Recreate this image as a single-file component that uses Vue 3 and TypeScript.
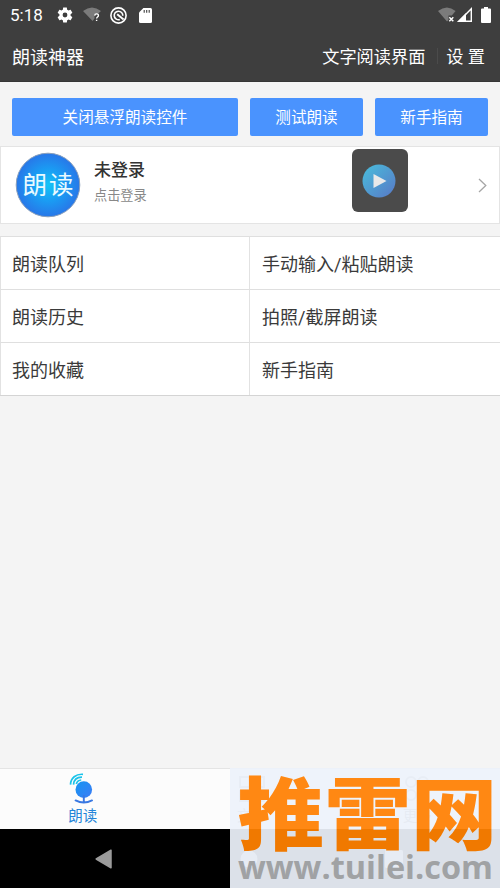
<script setup lang="ts">
interface Action {
  label: string
  wide?: boolean
}

const actions: Action[] = [
  { label: '关闭悬浮朗读控件', wide: true },
  { label: '测试朗读' },
  { label: '新手指南' },
]

const menu: string[] = [
  '朗读队列',
  '手动输入/粘贴朗读',
  '朗读历史',
  '拍照/截屏朗读',
  '我的收藏',
  '新手指南',
]
</script>

<template>
  <div class="screen">
    <header class="top">
      <div class="status">
        <span class="clock">5:18</span>
        <svg class="gear" width="18" height="18" viewBox="0 0 24 24">
          <path fill="#fff" d="M19.43 12.98c.04-.32.07-.64.07-.98s-.03-.66-.07-.98l2.11-1.65c.19-.15.24-.42.12-.64l-2-3.46c-.12-.22-.39-.3-.61-.22l-2.49 1c-.52-.4-1.08-.73-1.69-.98l-.38-2.65C14.46 2.18 14.25 2 14 2h-4c-.25 0-.46.18-.49.42l-.38 2.65c-.61.25-1.17.59-1.69.98l-2.49-1c-.23-.09-.49 0-.61.22l-2 3.46c-.13.22-.07.49.12.64l2.11 1.65c-.04.32-.07.65-.07.98s.03.66.07.98l-2.11 1.65c-.19.15-.24.42-.12.64l2 3.46c.12.22.39.3.61.22l2.49-1c.52.4 1.08.73 1.69.98l.38 2.65c.03.24.24.42.49.42h4c.25 0 .46-.18.49-.42l.38-2.65c.61-.25 1.17-.59 1.69-.98l2.49 1c.23.09.49 0 .61-.22l2-3.46c.12-.22.07-.49-.12-.64zM12 15.2a3.2 3.2 0 1 1 0-6.4 3.2 3.2 0 0 1 0 6.4z" />
        </svg>
        <svg class="wifi-ask" width="19" height="16" viewBox="0 0 19 16">
          <path fill="#7b7b7b" d="M0 4Q9 -3 18 4L14.5 7.2H11.5V11.6L9.6 14Z" />
          <path fill="none" stroke="#fff" stroke-width="1.4" d="M11.7 8.6C11.8 6.2 15.6 6.3 15.4 8.6C15.3 10 13.7 10 13.6 11.5M13.6 12.7V14.1" />
        </svg>
        <svg class="ring" width="17" height="17" viewBox="0 0 17 17" fill="none" stroke="#fff">
          <circle cx="8.5" cy="8.5" r="7.6" stroke-width="1.6" />
          <path stroke-width="1.6" d="M9.8 12.6A4.3 4.3 0 1 1 12.8 8.8" />
          <path stroke-width="1.9" d="M7.2 7.2L13.6 12.6" />
        </svg>
        <svg class="sd" width="13" height="15" viewBox="0 0 13 15">
          <path fill="#fff" d="M4.4 0H11.5Q13 0 13 1.5V13.5Q13 15 11.5 15H1.5Q0 15 0 13.5V4.4Z" />
          <path stroke="#3e3e3e" stroke-width="1.1" d="M5.2 2V4.7M7.7 2V4.7M10.2 2V4.7" />
        </svg>
        <span class="spacer"></span>
        <svg class="wifi-off" width="18" height="16" viewBox="0 0 18 16">
          <path fill="#7b7b7b" d="M0 4Q9 -3 17.6 4L13.8 8.5H10.5V13L9 14.5Z" />
          <path stroke="#fff" stroke-width="1.5" d="M11.3 10.3L15.3 14.3M15.3 10.3L11.3 14.3" />
        </svg>
        <svg class="signal" width="16" height="16" viewBox="0 0 16 16">
          <path fill="none" stroke="#fff" stroke-width="1.4" d="M2 14.2L14.3 1.8V14.2Z" />
          <path fill="#fff" d="M0 15L9 6V15Z" />
        </svg>
        <svg class="battery" width="10" height="16" viewBox="0 0 10 16">
          <path fill="#fff" d="M3 0H7V1.6H9Q10 1.6 10 2.6V15Q10 16 9 16H1Q0 16 0 15V2.6Q0 1.6 1 1.6H3Z" />
        </svg>
      </div>
      <div class="bar">
        <span class="title">朗读神器</span>
        <span class="link">文字阅读界面</span>
        <i class="divider"></i>
        <span class="link">设 置</span>
      </div>
    </header>

    <main class="content">
      <div class="actions">
        <button v-for="a in actions" :key="a.label" :class="{ wide: a.wide }">{{ a.label }}</button>
      </div>

      <section class="profile">
        <svg class="avatar" width="68" height="68" viewBox="0 0 68 68">
          <defs>
            <radialGradient id="face">
              <stop offset="0" stop-color="#12c4f6" />
              <stop offset=".5" stop-color="#1a9cf3" />
              <stop offset="1" stop-color="#2877e8" />
            </radialGradient>
          </defs>
          <circle cx="34" cy="34" r="31.8" fill="url(#face)" stroke="#8aa0bb" stroke-width="1" />
          <text x="8.5" y="42.5" class="avatar-text">朗</text>
          <text x="35" y="42.5" class="avatar-text">读</text>
        </svg>
        <div class="who">
          <strong>未登录</strong>
          <span>点击登录</span>
        </div>
        <svg class="chevron" width="9" height="15" viewBox="0 0 9 15">
          <path fill="none" stroke="#a6a6a6" stroke-width="1.3" d="M1 1L7.8 7.5L1 14" />
        </svg>
        <div class="floating">
          <svg width="34" height="34" viewBox="0 0 34 34">
            <defs>
              <linearGradient id="play" x1="0" y1="0" x2="1" y2="1">
                <stop offset=".1" stop-color="#4ab7da" />
                <stop offset=".9" stop-color="#577fc8" />
              </linearGradient>
            </defs>
            <circle cx="17" cy="17" r="16.5" fill="url(#play)" />
            <path fill="#e9e9e9" d="M11.5 10L24.5 17L11.5 24Z" />
          </svg>
        </div>
      </section>

      <section class="menu">
        <div v-for="m in menu" :key="m" class="cell">{{ m }}</div>
      </section>
    </main>

    <nav class="tabs">
      <div class="tab active">
        <svg width="28" height="32" viewBox="0 0 28 32">
          <defs>
            <linearGradient id="mic" x1="0" y1="0" x2="1" y2="1">
              <stop offset="0" stop-color="#1595f2" />
              <stop offset="1" stop-color="#3c7cf5" />
            </linearGradient>
          </defs>
          <circle cx="15.8" cy="16.6" r="8.3" fill="url(#mic)" />
          <path fill="none" stroke="#3978e2" stroke-width="1.9" stroke-linecap="round" d="M15.8 23V29M7.6 27.4Q15.8 31.6 24 27.4" />
          <g fill="none" stroke="#19c3ea" stroke-width="1.7">
            <path d="M2.5 11.6C2.7 4.9 8 .8 15 1.3" />
            <path d="M5.5 11.6C5.9 6.9 9 4.1 14 4.2" />
            <path d="M8.3 10.9C9 8.4 10.5 7.2 13.2 7" />
          </g>
        </svg>
        <span>朗读</span>
      </div>
      <div class="tab">
        <svg width="28" height="32" viewBox="0 0 28 32" fill="none" stroke="#aaa" stroke-width="2">
          <path d="M2 4H26V14H2ZM2 18H26V28H2ZM17 9H22M17 23H22" />
        </svg>
        <span>文件</span>
      </div>
      <div class="tab">
        <svg width="28" height="32" viewBox="0 0 28 32" fill="none" stroke="#aaa" stroke-width="2">
          <circle cx="8" cy="9" r="5" />
          <circle cx="20" cy="9" r="5" />
          <circle cx="8" cy="22" r="5" />
          <circle cx="20" cy="22" r="5" />
        </svg>
        <span>更多</span>
      </div>
    </nav>

    <footer class="system">
      <svg width="18" height="20" viewBox="0 0 18 20">
        <path fill="#9b9b9b" stroke="#9b9b9b" stroke-width="1.5" stroke-linejoin="round" d="M1.2 10L16 1.2V18.8Z" />
      </svg>
      <svg width="18" height="18" viewBox="0 0 18 18"><circle cx="9" cy="9" r="8.5" fill="#9b9b9b" /></svg>
      <svg width="18" height="18" viewBox="0 0 18 18"><rect x="0" y="0" width="18" height="18" rx="1.5" fill="#9b9b9b" /></svg>
    </footer>

    <div class="watermark">
      <svg width="270" height="120" viewBox="0 0 270 120">
        <defs>
          <linearGradient id="brand" gradientUnits="userSpaceOnUse" x1="0" y1="0" x2="0" y2="120">
            <stop offset=".51" stop-color="#ff8813" />
            <stop offset=".51" stop-color="#f07900" />
          </linearGradient>
        </defs>
        <text class="brand" x="7.5" y="76" fill="url(#brand)" textLength="260" lengthAdjust="spacingAndGlyphs">推雷网</text>
        <text class="site" x="8" y="111" textLength="255" lengthAdjust="spacingAndGlyphs">www.tuilei.com</text>
      </svg>
    </div>
  </div>
</template>

<style>
body {
  margin: 0;
}
</style>

<style scoped>
.screen {
  position: relative;
  display: flex;
  flex-direction: column;
  width: 500px;
  height: 888px;
  overflow: hidden;
  background: #f4f4f4;
  color: #3a3a3a;
  font-family: Roboto, 'Noto Sans CJK SC', sans-serif;
}
.top {
  height: 82px;
  border-bottom: 1px solid #363636;
  box-sizing: border-box;
  background: #3e3e3e;
  color: #fff;
}
.status {
  display: flex;
  align-items: center;
  height: 30px;
  padding: 0 9px 0 10px;
}
.clock {
  width: 46px;
  font-size: 17px;
  line-height: 30px;
}
.wifi-ask {
  margin-left: 9px;
}
.ring {
  margin-left: 8px;
}
.sd {
  margin-left: 12px;
}
.spacer {
  flex: 1;
}
.signal {
  margin-left: 1px;
}
.battery {
  margin-left: 8px;
}
.bar {
  display: flex;
  align-items: center;
  height: 51px;
  padding: 0 15px 0 12px;
}
.title {
  flex: 1;
  font-size: 18px;
}
.link {
  font-size: 17.2px;
  line-height: 26px;
  padding-top: 2px;
}
.divider {
  width: 1px;
  height: 16px;
  margin: 0 8px 0 12px;
  background: #4b4b4b;
}
.content {
  flex: 1;
}
.actions {
  display: flex;
  gap: 12px;
  padding: 15.5px 12px 10px;
}
button {
  flex: 113 1 0;
  height: 38.5px;
  padding: 1px 0 0;
  border: 0;
  border-radius: 2px;
  background: #4a93fe;
  color: #fff;
  font: 15.6px/38px Roboto, 'Noto Sans CJK SC', sans-serif;
}
button.wide {
  flex-grow: 226;
}
.profile {
  position: relative;
  display: flex;
  align-items: center;
  height: 78px;
  box-sizing: border-box;
  padding: 0 12px 0 13px;
  border: 1px solid #e4e4e4;
  background: #fff;
}
.avatar-text {
  fill: #e9faff;
  font: 400 24.5px 'Noto Sans CJK SC', sans-serif;
}
.who {
  flex: 1;
  display: flex;
  flex-direction: column;
  margin: -5px 0 0 12px;
}
.who strong {
  font-size: 17px;
  font-weight: 500;
  line-height: 26px;
  color: #333;
}
.who span {
  font-size: 13.2px;
  line-height: 26px;
  color: #888;
}
.floating {
  position: absolute;
  left: 351px;
  top: 2px;
  display: flex;
  align-items: center;
  justify-content: center;
  width: 56px;
  height: 63px;
  padding-right: 3px;
  box-sizing: border-box;
  border-radius: 6px;
  background: #4b4b4b;
}
.menu {
  display: grid;
  grid-template-columns: 249px 251px;
  margin-top: 12px;
  border-bottom: 1px solid #d4d4d4;
}
.cell {
  height: 53px;
  box-sizing: border-box;
  padding-left: 11px;
  border-top: 1px solid #dfdfdf;
  border-left: 1px solid #e2e2e2;
  background: #fff;
  font-size: 18px;
  line-height: 56px;
}
.cell:nth-child(even) {
  padding-left: 12px;
}
.tabs {
  display: flex;
  height: 61px;
  box-sizing: border-box;
  border-top: 1px solid #e4e4e4;
  background: #fcfcfc;
}
.tab {
  flex: 1;
  display: flex;
  flex-direction: column;
  align-items: center;
  padding-top: 4px;
  color: #888;
  font-size: 14.5px;
  line-height: 24px;
}
.tab svg {
  flex: none;
}
.tab.active {
  box-sizing: border-box;
  color: #2384d8;
  padding-right: 3px;
}
.tab.active svg {
  margin-right: 1px;
}
.system {
  display: flex;
  align-items: center;
  gap: 127px;
  height: 59px;
  padding-left: 95px;
  box-sizing: border-box;
  background: #000;
}
.watermark {
  position: absolute;
  left: 230px;
  top: 768px;
  width: 270px;
  height: 120px;
  background: rgba(237, 242, 251, 0.93);
}
.watermark svg {
  display: block;
  overflow: visible;
}
.brand {
  font: 900 79px 'Noto Sans CJK SC', sans-serif;
}
.site {
  fill: #a0a2a4;
  font: 700 32px 'Open Sans', sans-serif;
}
</style>
